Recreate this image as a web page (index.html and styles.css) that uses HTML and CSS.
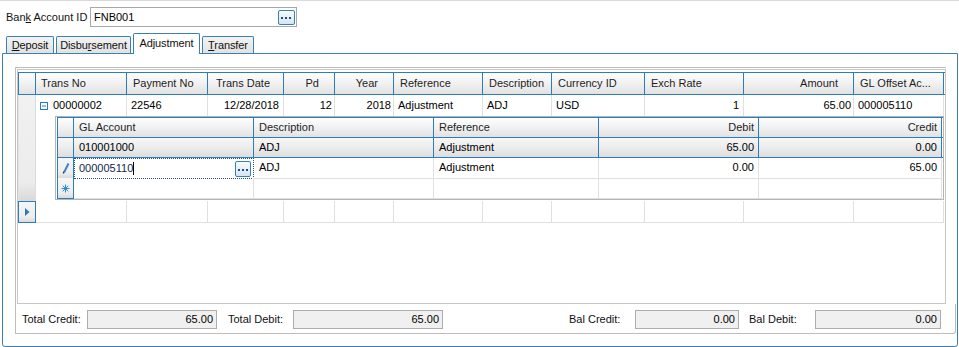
FILE: index.html
```html
<!DOCTYPE html>
<html lang="en">
<head>
  <meta charset="UTF-8">
  <title>Bank Adjustment</title>
  <link rel="stylesheet" href="styles.css">
</head>
<body>
  <div class="window">
    <div class="account-bar">
      <label class="acc-label">Ban<u>k</u> Account ID</label>
      <div class="lookup">
        <span class="lookup-text">FNB001</span>
        <button class="ellipsis">
          <svg width="11" height="2" viewBox="0 0 11 2"><rect x="0" y="0" width="2" height="2"/><rect x="4" y="0" width="2" height="2"/><rect x="8" y="0" width="2" height="2"/></svg>
        </button>
      </div>
    </div>

    <div class="tabs">
      <div class="tab tab-deposit"><u>D</u>eposit</div>
      <div class="tab tab-disb">Disbu<u>r</u>sement</div>
      <div class="tab tab-adj active">Adjustment</div>
      <div class="tab tab-transfer"><u>T</u>ransfer</div>
    </div>

    <div class="tab-panel">
      <div class="grid-frame">
        <div class="grid">
          <!-- master header -->
          <div class="mrow mhead">
            <div class="hc ind"></div>
            <div class="hc">Trans No</div>
            <div class="hc">Payment No</div>
            <div class="hc pad8">Trans Date</div>
            <div class="hc right">Pd</div>
            <div class="hc right">Year</div>
            <div class="hc">Reference</div>
            <div class="hc">Description</div>
            <div class="hc">Currency ID</div>
            <div class="hc">Exch Rate</div>
            <div class="hc right">Amount</div>
            <div class="hc">GL Offset Ac...</div>
          </div>

          <!-- expanded record -->
          <div class="record">
            <div class="rec-ind"></div>
            <div class="rec-body">
              <div class="rec-cells">
                <div class="dc"><svg class="expander" width="8" height="8" viewBox="0 0 8 8"><rect x="0.5" y="0.5" width="7" height="7" fill="#fff" stroke="#2b7bc0"/><path d="M2 4h4" stroke="#2b7bc0"/></svg>00000002</div>
                <div class="dc">22546</div>
                <div class="dc right">12/28/2018</div>
                <div class="dc right tight">12</div>
                <div class="dc right tight">2018</div>
                <div class="dc">Adjustment</div>
                <div class="dc">ADJ</div>
                <div class="dc">USD</div>
                <div class="dc right">1</div>
                <div class="dc right tight">65.00</div>
                <div class="dc">000005110</div>
              </div>

              <div class="detail">
                <div class="subgrid">
                  <div class="srow shead">
                    <div class="hc ind"></div>
                    <div class="hc">GL Account</div>
                    <div class="hc">Description</div>
                    <div class="hc">Reference</div>
                    <div class="hc right">Debit</div>
                    <div class="hc right">Credit</div>
                  </div>
                  <div class="srow sfocus">
                    <div class="hc ind"></div>
                    <div class="hc">010001000</div>
                    <div class="hc">ADJ</div>
                    <div class="hc">Adjustment</div>
                    <div class="hc right">65.00</div>
                    <div class="hc right">0.00</div>
                  </div>
                  <div class="srow">
                    <div class="sind">
                      <svg width="8" height="12" viewBox="0 0 8 12"><path d="M2 10.5 L6.5 1.5" stroke="#3d83c6" stroke-width="2"/><path d="M1.2 11.6 L2 9.8" stroke="#1b3f6a" stroke-width="1.2"/></svg>
                    </div>
                    <div class="sc editing"><span class="edit-text">000005110</span><span class="caret"></span>
                      <button class="ellipsis small">
                        <svg width="11" height="2" viewBox="0 0 11 2"><rect x="0" y="0" width="2" height="2"/><rect x="4" y="0" width="2" height="2"/><rect x="8" y="0" width="2" height="2"/></svg>
                      </button>
                    </div>
                    <div class="sc">ADJ</div>
                    <div class="sc">Adjustment</div>
                    <div class="sc right">0.00</div>
                    <div class="sc right">65.00</div>
                  </div>
                  <div class="srow snew">
                    <div class="sind">
                      <svg width="9" height="9" viewBox="0 0 9 9"><path d="M4.5 0.5v8M0.5 4.5h8M1.7 1.7l5.6 5.6M7.3 1.7l-5.6 5.6" stroke="#2f8ad6" stroke-width="1"/></svg>
                    </div>
                    <div class="sc"></div>
                    <div class="sc"></div>
                    <div class="sc"></div>
                    <div class="sc"></div>
                    <div class="sc"></div>
                  </div>
                </div>
              </div>
            </div>
          </div>

          <!-- new master row -->
          <div class="mrow mnew">
            <div class="nind">
              <svg width="5" height="8" viewBox="0 0 5 8"><path d="M0 0 L4.5 4 L0 8z" fill="#2b7bc0"/></svg>
            </div>
            <div class="nc"></div><div class="nc"></div><div class="nc"></div><div class="nc"></div>
            <div class="nc"></div><div class="nc"></div><div class="nc"></div><div class="nc"></div>
            <div class="nc"></div><div class="nc"></div><div class="nc"></div>
          </div>
        </div>
      </div>

      <div class="totals">
        <span class="tot-label">Total Credit:</span>
        <span class="tot-box w130">65.00</span>
        <span class="tot-label gap">Total Debit:</span>
        <span class="tot-box w150">65.00</span>
        <span class="tot-label push">Bal Credit:</span>
        <span class="tot-box w104">0.00</span>
        <span class="tot-label gap10">Bal Debit:</span>
        <span class="tot-box w126">0.00</span>
      </div>
    </div>
  </div>
</body>
</html>
```

FILE: styles.css
```css
* {
  margin: 0;
  padding: 0;
  box-sizing: border-box;
}

body {
  font-family: "Liberation Sans", Arial, sans-serif;
  font-size: 11px;
  color: #000;
  background: #fff;
}

.window {
  border-top: 1px solid #d9d9d9;
  height: 347px;
  overflow: hidden;
}

/* account lookup */
.account-bar {
  display: flex;
  align-items: center;
  height: 26px;
  padding: 6px 0 0 6px;
}

.acc-label {
  width: 84px;
  color: #111;
}

.lookup {
  width: 207px;
  height: 20px;
  border: 1px solid #a8a8a8;
  display: flex;
  align-items: center;
  padding-left: 3px;
}

.lookup-text {
  flex: 1;
}

.ellipsis {
  width: 17px;
  height: 15px;
  margin-right: 1px;
  border: 1px solid #3c7fb1;
  border-radius: 2px;
  background: linear-gradient(#f7fbff, #d6e4f2);
  display: flex;
  align-items: center;
  justify-content: center;
  padding-top: 2px;
}

.ellipsis svg {
  fill: #1d4f86;
}

.ellipsis.small {
  width: 16px;
  height: 16px;
  margin: 0 2px 0 auto;
}

/* tabs */
.tabs {
  display: flex;
  align-items: flex-end;
  height: 20px;
  margin-top: 6px;
  padding-left: 6px;
  position: relative;
  z-index: 1;
}

.tab {
  height: 17px;
  border: 1px solid #3c7fb1;
  border-bottom: none;
  border-radius: 2px 2px 0 0;
  background: linear-gradient(#f4f4f4, #e1e1e1);
  text-align: center;
  line-height: 16px;
  margin-right: 2px;
  color: #111;
  white-space: nowrap;
  letter-spacing: -0.1px;
}

.tab-deposit { width: 48px; }
.tab-disb { width: 75px; }
.tab-adj { width: 67px; }
.tab-transfer { width: 52px; }

.tab.active {
  height: 21px;
  margin-bottom: -1px;
  background: #fff;
  line-height: 18px;
}

/* panel */
.tab-panel {
  margin-left: 2px;
  width: 956px;
  height: 294px;
  border: 1px solid #3c7fb1;
  border-radius: 0 0 3px 3px;
  padding: 13px 0 0 12px;
}

.grid-frame {
  width: 931px;
  border-left: 1px solid #bdbdbd;
  border-top: 1px solid #bdbdbd;
  padding: 1px 0 0 1px;
}

.grid {
  height: 235px;
  border: 1px solid #c6c6c6;
  padding-top: 2px;
}

/* master grid */
.mrow {
  display: grid;
  grid-template-columns: 18px 91px 81px 76px 51px 59px 89px 69px 93px 99px 110px 90px;
}

.hc {
  height: 21px;
  line-height: 21px;
  padding: 0 6px;
  border-right: 1px solid #2c7cc0;
  background: linear-gradient(#fefefe 0%, #f1f1f1 50%, #e2e2e2 100%);
  color: #1e1e1e;
  white-space: nowrap;
  overflow: hidden;
}

.hc.ind {
  border-left: 1px solid #2c7cc0;
  padding: 0;
}

.mhead {
  border-top: 1px solid #2c7cc0;
  border-bottom: 1px solid #2c7cc0;
}

.mhead .right {
  padding-right: 15px;
}

.mhead .hc:nth-child(2) {
  padding-left: 5px;
}

.pad8 {
  padding-left: 8px;
}

.right {
  text-align: right;
}

.record {
  display: flex;
}

.rec-ind {
  width: 18px;
  background: linear-gradient(#f1f1f1 0%, #ececec 82%, #d9d9d9 100%);
  border-left: 1px solid #e4e4e4;
  border-right: 1px solid #dcdcdc;
}

.rec-body {
  flex: 1;
}

.rec-cells {
  display: grid;
  grid-template-columns: 91px 81px 76px 51px 59px 89px 69px 93px 99px 110px 90px;
}

.dc {
  height: 21px;
  line-height: 21px;
  padding: 0 4px;
  border-right: 1px solid #e0e0e0;
  white-space: nowrap;
  display: flex;
  align-items: center;
}

.dc.right {
  justify-content: flex-end;
}

.dc.tight {
  padding-right: 2px;
}

.dc:first-child {
  padding-left: 4px;
}

.expander {
  margin-right: 5px;
}

/* detail grid */
.detail {
  padding: 0 1px 1px 19px;
}

.subgrid {
  border: 1px solid #b4b4b4;
  padding-left: 1px;
}

.srow {
  display: grid;
  grid-template-columns: 17px 180px 180px 165px 160px 183px;
  height: 20px;
}

.shead {
  height: 21px;
  border-top: 1px solid #2c7cc0;
  border-bottom: 1px solid #2c7cc0;
}

.shead .hc {
  height: 19px;
  line-height: 19px;
  padding-left: 5px;
}

.srow .hc.right {
  padding-right: 4px;
}

.sfocus {
  border-bottom: 1px solid #2c7cc0;
}

.sfocus .hc {
  height: 19px;
  line-height: 19px;
  color: #000;
  padding-left: 5px;
  background: linear-gradient(#f7f7f7 0%, #ececec 50%, #dedede 100%);
}

.sfocus .hc.ind,
.shead .hc.ind {
  padding: 0;
}

.sind {
  border-left: 1px solid #2c7cc0;
  border-right: 1px solid #2c7cc0;
  border-bottom: 1px solid #2c7cc0;
  background: linear-gradient(#f6f6f6 0%, #ededed 75%, #dadada 100%);
  display: flex;
  align-items: center;
  justify-content: center;
}

.sc {
  border-right: 1px solid #e0e0e0;
  border-bottom: 1px solid #e0e0e0;
  padding: 0 4px 0 5px;
  line-height: 19px;
  white-space: nowrap;
}

.snew {
  height: 21px;
}

.sc.editing {
  border: 1px dotted #24528a;
  display: flex;
  align-items: center;
  padding-left: 4px;
  padding-right: 0;
}

.edit-text {
  color: #14284a;
}

.caret {
  width: 1px;
  height: 13px;
  background: #000;
}

/* new master row */
.mnew {
  height: 22px;
}

.nind {
  border: 1px solid #2c7cc0;
  background: linear-gradient(#f6f6f6 0%, #ededed 75%, #dadada 100%);
  display: flex;
  align-items: center;
  justify-content: center;
  padding-left: 1px;
}

.nc {
  border-right: 1px solid #e0e0e0;
  border-bottom: 1px solid #e0e0e0;
}

/* totals */
.totals {
  width: 941px;
  height: 30px;
  border: 1px solid #bdbdbd;
  border-top: none;
  border-radius: 0 0 3px 0;
  display: flex;
  align-items: center;
  padding: 1px 14px 0 6px;
}

.tot-label {
  width: 65px;
  color: #111;
}

.tot-label.gap {
  margin-left: 11px;
}

.tot-label.push {
  margin-left: auto;
  width: 66px;
}

.tot-label.gap10 {
  margin-left: 10px;
  width: 66px;
}

.tot-box {
  height: 19px;
  line-height: 17px;
  border: 1px solid #adadad;
  background: #f0f0f0;
  text-align: right;
  padding-right: 3px;
}

.w130 { width: 130px; }
.w150 { width: 150px; }
.w104 { width: 104px; }
.w126 { width: 126px; }
```
